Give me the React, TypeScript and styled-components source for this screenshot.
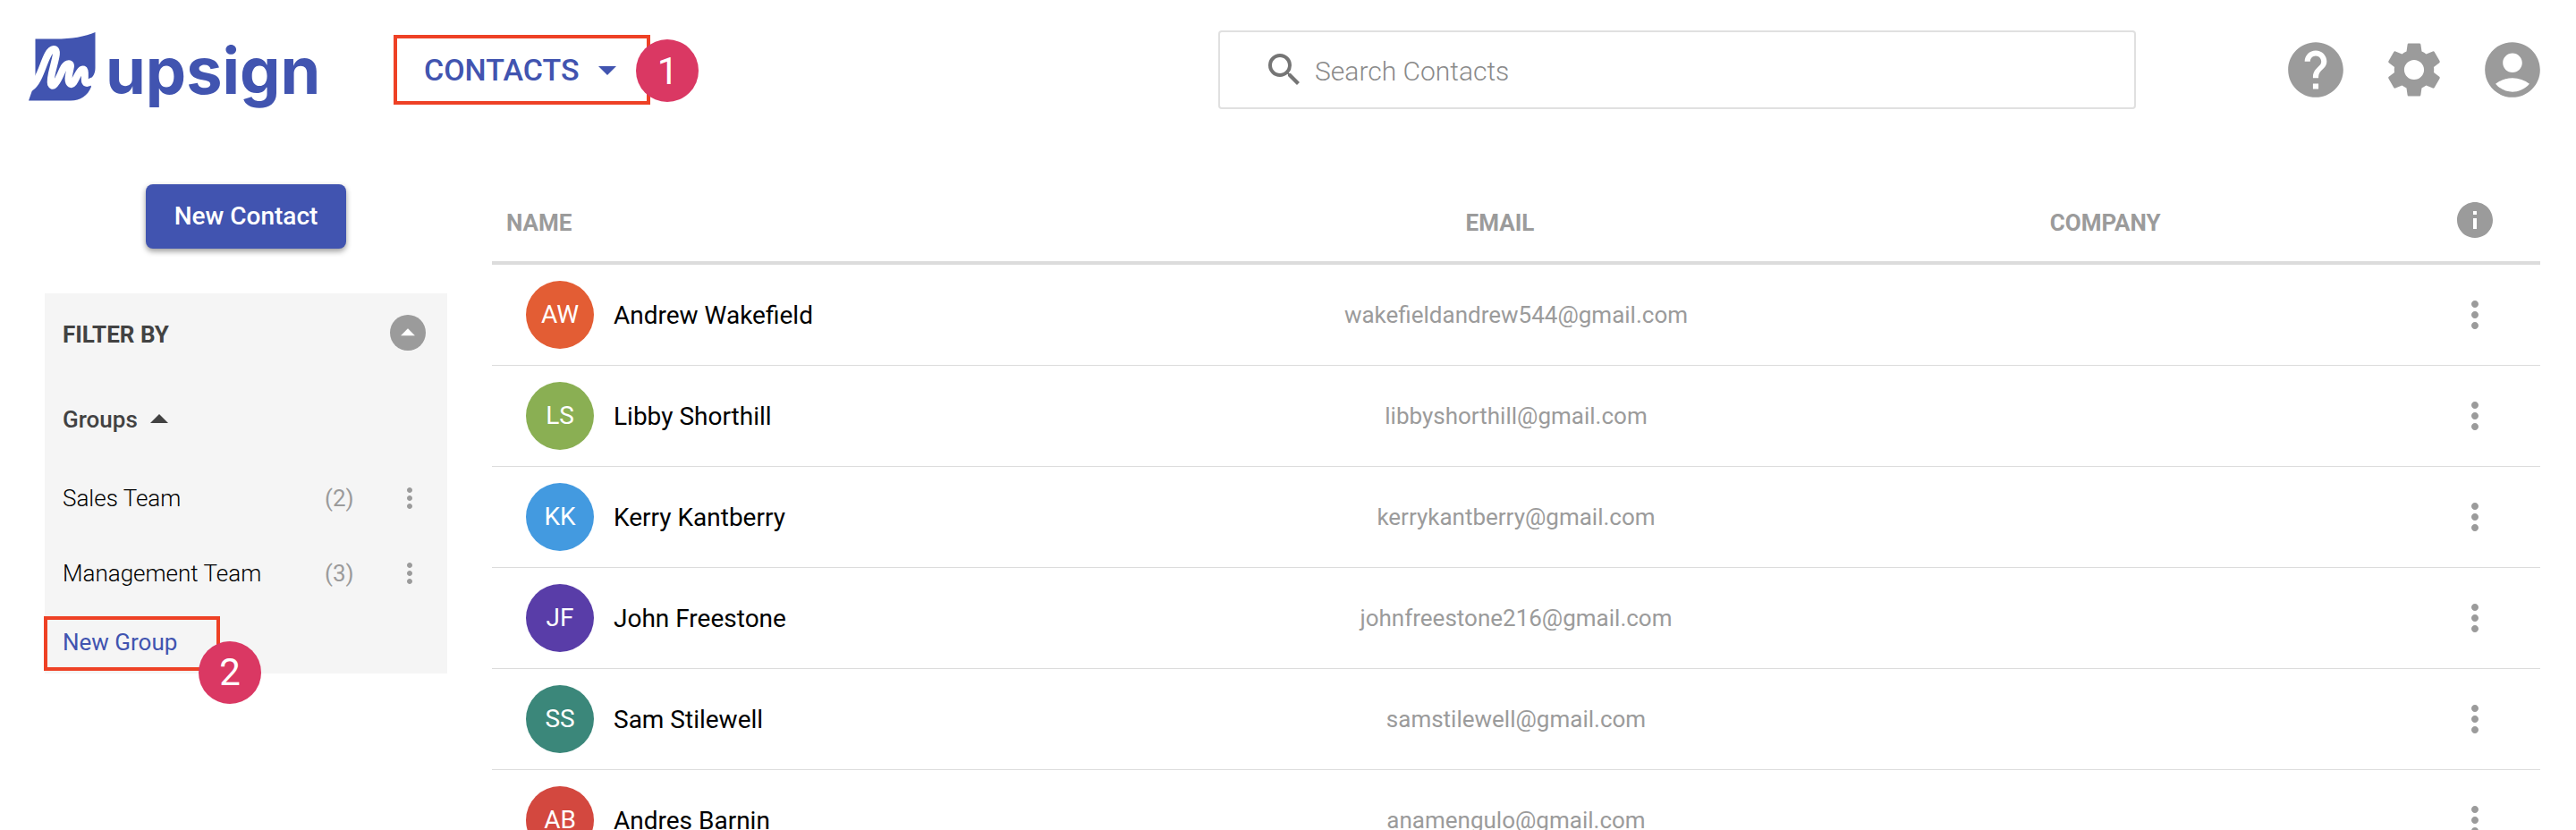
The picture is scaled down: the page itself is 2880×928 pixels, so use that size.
import React from "react";
import styled, { createGlobalStyle } from "styled-components";
import {
  MdAccountCircle,
  MdArrowDropDown,
  MdArrowDropUp,
  MdHelp,
  MdInfo,
  MdMoreVert,
  MdSearch,
  MdSettings,
} from "react-icons/md";

const color = {
  brand: "#4154b0",
  grey: "#9b9b9b",
  line: "#dcdcdc",
  panel: "#f5f5f5",
  dark: "#424242",
  mark: "#ee4125",
  step: "#da3863",
};

const GlobalStyle = createGlobalStyle`
  * { box-sizing: border-box; }
  body { margin: 0; background: #fff; color: #000; font-family: Roboto, sans-serif; }
  button { border: 0; padding: 0; background: none; font: inherit; color: inherit; cursor: pointer; }
`;

const Page = styled.div`
  display: flex;
  flex-direction: column;
  height: 100vh;
  overflow: hidden;
`;

const TopBar = styled.header`
  display: grid;
  grid-template-columns: 1330fr 1026fr 458fr;
  align-items: center;
  flex: none;
  height: 156px;
  padding: 0 34px 0 32px;
`;

const TopLeft = styled.div`
  display: flex;
  align-items: center;
  gap: 88px;
`;

const Logo = styled.a`
  display: flex;
  width: 320px;
  color: ${color.brand};
  text-decoration: none;
  svg { overflow: visible; }
`;

const Highlight = styled.div<{ $tall?: boolean }>`
  position: relative;
  display: flex;
  align-items: center;
  height: ${(p) => (p.$tall ? 78 : 61)}px;
  border: 4px solid ${color.mark};
`;

const Step = styled.span<{ $low?: boolean }>`
  position: absolute;
  top: ${(p) => (p.$low ? 24 : 1)}px;
  left: calc(100% - ${(p) => (p.$low ? 20 : 12)}px);
  display: flex;
  align-items: center;
  justify-content: center;
  width: 70px;
  height: 70px;
  border-radius: 50%;
  background: ${color.step};
  color: #fff;
  font-size: 42px;
`;

const SectionMenu = styled.button`
  display: flex;
  align-items: center;
  gap: 8px;
  padding: 0 20px 0 30px;
  color: ${color.brand};
  font-size: 34px;
  font-weight: 500;
  line-height: 40px;
`;

const SearchBox = styled.label`
  display: flex;
  align-items: center;
  gap: 10px;
  height: 88px;
  padding: 0 48px;
  border: 2px solid #e0e0e0;
  border-radius: 4px;
  color: #757575;
`;

const SearchInput = styled.input`
  flex: 1;
  min-width: 0;
  border: 0;
  outline: 0;
  padding: 4px 0 0;
  background: none;
  font: 300 30px/36px Roboto, sans-serif;
  &::placeholder { color: #8a8a8a; opacity: 1; }
`;

const TopActions = styled.nav`
  display: flex;
  justify-content: flex-end;
  gap: 36px;
`;

const IconButton = styled.button`
  display: inline-flex;
  align-items: center;
  justify-content: center;
  color: ${color.grey};
`;

const Body = styled.div`
  display: grid;
  grid-template-columns: 450px 1fr;
  gap: 50px;
  align-items: start;
  padding: 50px 40px 0 50px;
`;

const Side = styled.aside`
  display: flex;
  flex-direction: column;
  align-items: center;
  gap: 50px;
`;

const PrimaryButton = styled.button`
  height: 72px;
  padding: 0 32px 2px;
  border-radius: 8px;
  background: ${color.brand};
  color: #fff;
  font-size: 28px;
  font-weight: 500;
  box-shadow: 0 3px 6px rgba(0, 0, 0, 0.4);
`;

const Panel = styled.section`
  align-self: stretch;
  padding: 24px 0 3px;
  background: ${color.panel};
  color: ${color.dark};
  font-size: 26px;
  line-height: 40px;
`;

const PanelHead = styled.div`
  display: flex;
  justify-content: space-between;
  padding: 0 24px 0 20px;
`;

const PanelTitle = styled.h2`
  margin: 0;
  padding-top: 2px;
  font-size: 26px;
  font-weight: 700;
`;

const CollapseButton = styled.button`
  display: flex;
  align-items: center;
  justify-content: center;
  width: 40px;
  height: 40px;
  border-radius: 50%;
  background: ${color.grey};
  color: #fff;
`;

const GroupToggle = styled.button`
  display: flex;
  align-items: center;
  margin: 51px 0 22px;
  padding-left: 20px;
  font-weight: 500;
`;

const GroupList = styled.ul`
  margin: 0 0 6px;
  padding: 0;
  list-style: none;
`;

const GroupRow = styled.li`
  display: grid;
  grid-template-columns: 1fr 77px 36px;
  align-items: center;
  height: 84px;
  padding: 0 24px 0 20px;
  color: #000;
  font-weight: 300;
`;

const Count = styled.span`
  color: ${color.grey};
  font-weight: 400;
`;

const NewGroup = styled(Highlight)`
  width: 197px;
  margin-left: -1px;
`;

const TextLink = styled.a`
  padding: 0 0 4px 17px;
  color: ${color.brand};
  text-decoration: none;
`;

const Table = styled.table`
  width: 100%;
  table-layout: fixed;
  border-collapse: separate;
  border-spacing: 0;
`;

const HeadCell = styled.th<{ $width: number; $start?: boolean; $sortable?: boolean }>`
  width: ${(p) => p.$width}%;
  height: 90px;
  padding: 0 ${(p) => (p.$sortable ? 36 : 0)}px 0 ${(p) => (p.$start ? 16 : 0)}px;
  border-bottom: 4px solid ${color.line};
  color: ${color.grey};
  font-size: 26px;
  font-weight: 700;
  text-align: ${(p) => (p.$start ? "left" : "center")};
`;

const Cell = styled.td`
  height: 113px;
  padding: 0;
  border-bottom: 1px solid ${color.line};
  color: ${color.grey};
  font-size: 26px;
  text-align: center;
  vertical-align: middle;
  ${IconButton} { vertical-align: middle; }
`;

const Person = styled.div`
  display: flex;
  align-items: center;
  gap: 22px;
  padding-left: 38px;
  color: #000;
  font-size: 28px;
`;

const Avatar = styled.span<{ $fill: string }>`
  display: flex;
  align-items: center;
  justify-content: center;
  width: 76px;
  height: 76px;
  padding-bottom: 2px;
  border-radius: 50%;
  background: ${(p) => p.$fill};
  color: #fff;
  font-size: 28px;
`;

const contacts = [
  { name: "Andrew Wakefield", initials: "AW", fill: "#e35d34", email: "wakefieldandrew544@gmail.com" },
  { name: "Libby Shorthill", initials: "LS", fill: "#8aaf53", email: "libbyshorthill@gmail.com" },
  { name: "Kerry Kantberry", initials: "KK", fill: "#439ae0", email: "kerrykantberry@gmail.com" },
  { name: "John Freestone", initials: "JF", fill: "#593da8", email: "johnfreestone216@gmail.com" },
  { name: "Sam Stilewell", initials: "SS", fill: "#3b877a", email: "samstilewell@gmail.com" },
  { name: "Andres Barnin", initials: "AB", fill: "#d3483f", email: "anamengulo@gmail.com" },
];

const groups = [
  { name: "Sales Team", count: 2 },
  { name: "Management Team", count: 3 },
];

function UpsignLogo() {
  return (
    <svg width="320" height="88" viewBox="32 34 320 88" role="img" aria-label="upsign">
      <path
        fill="currentColor"
        d="M39.500 43.500H62C80 43.500 95 41 106.500 36V76C106.500 82 104 86 100 89L102 97C98 107 90 112.500 79 112.500H32L36 101L39.500 98Z"
      />
      <path
        fill="none"
        stroke="#fff"
        strokeWidth="8"
        strokeLinecap="round"
        strokeLinejoin="round"
        d="M34 98C47 90 50 56 60 55C69 55 54 84 57 94C60 101 67 85 70 78C73 71 79 69 79 74C78 81 74 91 79 94C83 96 86 82 91 78C97 75 94 86 95 91C96 94 99 93 102 91"
      />
      <text x="118" y="105" fill="currentColor" fontFamily="Inter, sans-serif" fontSize="72" fontWeight="700">
        upsign
      </text>
    </svg>
  );
}

export default function App() {
  return (
    <Page>
      <GlobalStyle />
      <TopBar>
        <TopLeft>
          <Logo href="#">
            <UpsignLogo />
          </Logo>
          <Highlight $tall>
            <SectionMenu>
              CONTACTS
              <MdArrowDropDown size={48} />
            </SectionMenu>
            <Step>1</Step>
          </Highlight>
        </TopLeft>
        <SearchBox>
          <MdSearch size={48} />
          <SearchInput type="search" placeholder="Search Contacts" aria-label="Search Contacts" />
        </SearchBox>
        <TopActions>
          <IconButton aria-label="Help"><MdHelp size={74} /></IconButton>
          <IconButton aria-label="Settings"><MdSettings size={74} /></IconButton>
          <IconButton aria-label="Account"><MdAccountCircle size={74} /></IconButton>
        </TopActions>
      </TopBar>
      <Body>
        <Side>
          <PrimaryButton>New Contact</PrimaryButton>
          <Panel>
            <PanelHead>
              <PanelTitle>FILTER BY</PanelTitle>
              <CollapseButton aria-label="Collapse filters">
                <MdArrowDropUp size={38} />
              </CollapseButton>
            </PanelHead>
            <GroupToggle>
              Groups
              <MdArrowDropUp size={48} />
            </GroupToggle>
            <GroupList>
              {groups.map((g) => (
                <GroupRow key={g.name}>
                  {g.name}
                  <Count>({g.count})</Count>
                  <IconButton aria-label={`${g.name} options`}><MdMoreVert size={36} /></IconButton>
                </GroupRow>
              ))}
            </GroupList>
            <NewGroup>
              <TextLink href="#">New Group</TextLink>
              <Step $low>2</Step>
            </NewGroup>
          </Panel>
        </Side>
        <Table>
          <thead>
            <tr>
              <HeadCell $width={34.5} $start>NAME</HeadCell>
              <HeadCell $width={31} $sortable>EMAIL</HeadCell>
              <HeadCell $width={28.1} $sortable>COMPANY</HeadCell>
              <HeadCell $width={6.4}>
                <IconButton aria-label="Information"><MdInfo size={48} /></IconButton>
              </HeadCell>
            </tr>
          </thead>
          <tbody>
            {contacts.map((c) => (
              <tr key={c.name}>
                <Cell>
                  <Person>
                    <Avatar $fill={c.fill}>{c.initials}</Avatar>
                    {c.name}
                  </Person>
                </Cell>
                <Cell>{c.email}</Cell>
                <Cell />
                <Cell>
                  <IconButton aria-label={`${c.name} options`}><MdMoreVert size={48} /></IconButton>
                </Cell>
              </tr>
            ))}
          </tbody>
        </Table>
      </Body>
    </Page>
  );
}
